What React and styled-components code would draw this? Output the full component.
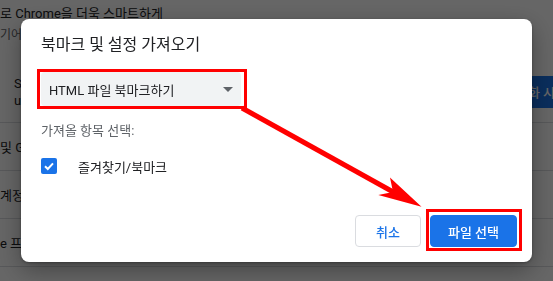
import React from 'react';
import styled, { createGlobalStyle } from 'styled-components';

const Global = createGlobalStyle`
  html, body {
    margin: 0;
    padding: 0;
    width: 553px;
    height: 281px;
    overflow: hidden;
    background: #fff;
  }
  body {
    font-family: Roboto, "Noto Sans CJK KR", sans-serif;
  }
`;

/* ---------- page underneath ---------- */
const Page = styled.div`
  width: 640px;
  height: 281px;
  padding-top: 4px;
  box-sizing: border-box;
  color: #202124;
`;

const Heading = styled.div`
  font-size: 13px;
  line-height: 20px;
  white-space: nowrap;
`;

const SubText = styled.div`
  margin-top: 2px;
  font-size: 12px;
  line-height: 18px;
  color: #5f6368;
  white-space: nowrap;
`;

const Row = styled.div`
  display: flex;
  align-items: center;
  justify-content: space-between;
  box-sizing: border-box;
  height: ${p => p.$h}px;
  padding: ${p => p.$pad || '0'};
  border-bottom: 1px solid #dadce0;
  font-size: 13px;
  white-space: nowrap;
`;

const Lines = styled.div`
  display: flex;
  flex-direction: column;
  line-height: 17px;
`;

const PageButton = styled.div`
  height: 32px;
  margin-right: 57px;
  padding: 0 16px;
  display: flex;
  align-items: center;
  border-radius: 4px;
  background: #1a73e8;
  color: #fff;
  font-size: 13px;
  font-weight: 500;
`;

/* ---------- overlay & dialog ---------- */
const Overlay = styled.div`
  position: fixed;
  inset: 0;
  background: rgba(0, 0, 0, 0.6);
  display: flex;
  align-items: center;
  justify-content: center;
`;

const Dialog = styled.div`
  position: relative;
  width: 511px;
  height: 243px;
  box-sizing: border-box;
  padding: 14px 10px 11px 20px;
  background: #fff;
  border-radius: 8px;
  box-shadow: 0 8px 24px rgba(0, 0, 0, 0.35), 0 1px 3px rgba(0, 0, 0, 0.3);
  display: flex;
  flex-direction: column;
  color: #202124;
`;

const Title = styled.div`
  font-size: 16px;
  line-height: 24px;
  color: #202124;
`;

const Highlight = styled.div`
  align-self: flex-start;
  display: flex;
  border: 3px solid #ff0000;
  padding: ${p => p.$pad};
  margin: ${p => p.$margin || '0'};
`;

const Select = styled.div`
  width: 200px;
  height: 34px;
  box-sizing: border-box;
  padding: 0 8px;
  display: flex;
  align-items: center;
  justify-content: space-between;
  background: #f1f3f4;
  border-radius: 4px;
  font-size: 13px;
  color: #202124;
`;

const Caret = styled.span`
  width: 0;
  height: 0;
  border-left: 5px solid transparent;
  border-right: 5px solid transparent;
  border-top: 5px solid #5f6368;
  margin-top: 1px;
`;

const Label = styled.div`
  margin-top: 12px;
  font-size: 13px;
  line-height: 20px;
  color: #5f6368;
`;

const CheckRow = styled.div`
  margin-top: 17px;
  display: flex;
  align-items: center;
  gap: 21px;
  height: 16px;
  font-size: 13px;
  color: #202124;
`;

const CheckBox = styled.span`
  width: 16px;
  height: 16px;
  border-radius: 2px;
  background: #1a73e8;
  display: flex;
  align-items: center;
  justify-content: center;
`;

const Footer = styled.div`
  margin-top: auto;
  display: flex;
  align-items: flex-end;
  justify-content: flex-end;
  gap: 5px;
`;

const Button = styled.button`
  height: 32px;
  width: ${p => p.$w}px;
  margin: ${p => p.$margin || '0'};
  box-sizing: border-box;
  border-radius: 4px;
  font-family: inherit;
  font-size: 13px;
  font-weight: 500;
  padding: 0;
  cursor: pointer;
  border: 1px solid ${p => (p.$primary ? '#1a73e8' : '#dadce0')};
  background: ${p => (p.$primary ? '#1a73e8' : '#fff')};
  color: ${p => (p.$primary ? '#fff' : '#1a73e8')};
`;

const ArrowLayer = styled.svg`
  position: absolute;
  left: 0;
  top: 0;
  width: 100%;
  height: 100%;
  pointer-events: none;
  overflow: visible;
`;

export default function App() {
  return (
    <>
      <Global />
      <Page>
        <Heading>로 Chrome을 더욱 스마트하게</Heading>
        <SubText>기어</SubText>
        <Row $h={79} $pad="31px 0 14px 14px">
          <Lines>
            <span>Sync</span>
            <span>user</span>
          </Lines>
          <PageButton>동기화 시작</PageButton>
        </Row>
        <Row $h={48}>및 Google 서비스</Row>
        <Row $h={48}>계정 관리</Row>
        <Row $h={48}>e 프로필 맞춤설정</Row>
      </Page>

      <Overlay>
        <Dialog>
          <Title>북마크 및 설정 가져오기</Title>
          <Highlight $pad="0 3px 0 1px" $margin="12px 0 0 -4px">
            <Select>
              <span>HTML 파일 북마크하기</span>
              <Caret />
            </Select>
          </Highlight>
          <Label>가져올 항목 선택:</Label>
          <CheckRow>
            <CheckBox>
              <svg width="12" height="12" viewBox="0 0 12 12">
                <path d="M2 6.2 L4.8 9 L10 3.4" fill="none" stroke="#fff" strokeWidth="2" />
              </svg>
            </CheckBox>
            <span>즐겨찾기/북마크</span>
          </CheckRow>
          <Footer>
            <Button $w={66} $margin="0 0 4px 0">취소</Button>
            <Highlight $pad="3px 2px 1px 1px">
              <Button $w={87} $primary>파일 선택</Button>
            </Highlight>
          </Footer>
          <ArrowLayer viewBox="0 0 511 243">
            <line x1="221" y1="89" x2="374" y2="174" stroke="#ff0000" strokeWidth="5" />
            <polygon points="400.5,187.7 369,158.5 372,173 357.3,176" fill="#ff0000" />
          </ArrowLayer>
        </Dialog>
      </Overlay>
    </>
  );
}
